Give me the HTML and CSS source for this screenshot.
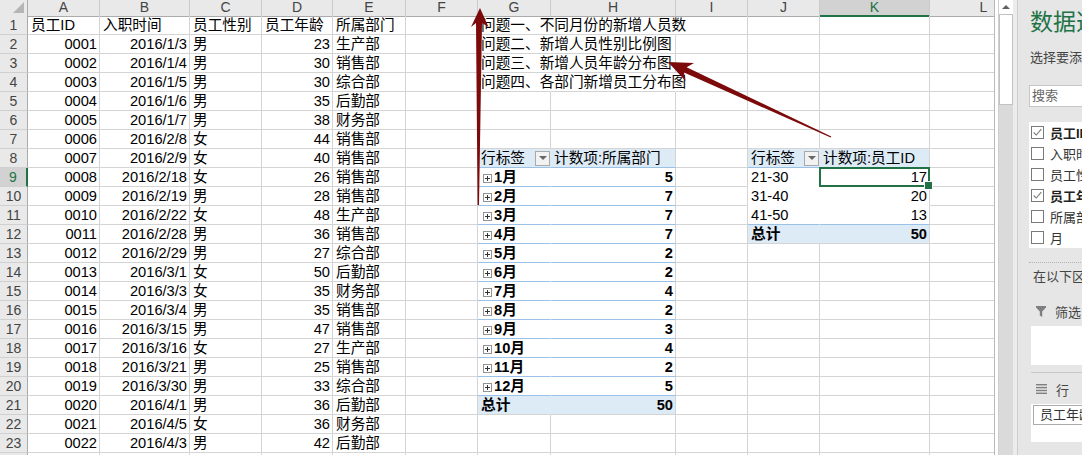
FILE: index.html
```html
<!DOCTYPE html>
<html lang="zh-CN">
<head>
<meta charset="utf-8">
<title>数据透视表</title>
<link rel="stylesheet" href="styles.css">
</head>
<body>
<div class="app">
  <div class="sheet">
    <div class="row head">
      <div class="corner"><span class="tri"></span></div>
      <div class="ch">A</div><div class="ch">B</div><div class="ch">C</div><div class="ch">D</div><div class="ch">E</div><div class="ch">F</div><div class="ch">G</div><div class="ch">H</div><div class="ch">I</div><div class="ch">J</div><div class="ch hsel">K</div><div class="ch">L</div>
    </div>
    <div class="row"><div class="rn">1</div><div class="c">员工ID</div><div class="c">入职时间</div><div class="c">员工性别</div><div class="c">员工年龄</div><div class="c">所属部门</div><div class="c"></div><div class="c ov">问题一、不同月份的新增人员数</div><div class="c nb"></div><div class="c"></div><div class="c"></div><div class="c"></div><div class="c"></div></div>
    <div class="row"><div class="rn">2</div><div class="c r">0001</div><div class="c r">2016/1/3</div><div class="c">男</div><div class="c r">23</div><div class="c">生产部</div><div class="c"></div><div class="c ov">问题二、新增人员性别比例图</div><div class="c"></div><div class="c"></div><div class="c"></div><div class="c"></div><div class="c"></div></div>
    <div class="row"><div class="rn">3</div><div class="c r">0002</div><div class="c r">2016/1/4</div><div class="c">男</div><div class="c r">30</div><div class="c">销售部</div><div class="c"></div><div class="c ov">问题三、新增人员年龄分布图</div><div class="c"></div><div class="c"></div><div class="c"></div><div class="c"></div><div class="c"></div></div>
    <div class="row"><div class="rn">4</div><div class="c r">0003</div><div class="c r">2016/1/5</div><div class="c">男</div><div class="c r">30</div><div class="c">综合部</div><div class="c"></div><div class="c ov">问题四、各部门新增员工分布图</div><div class="c nb"></div><div class="c"></div><div class="c"></div><div class="c"></div><div class="c"></div></div>
    <div class="row"><div class="rn">5</div><div class="c r">0004</div><div class="c r">2016/1/6</div><div class="c">男</div><div class="c r">35</div><div class="c">后勤部</div><div class="c"></div><div class="c"></div><div class="c"></div><div class="c"></div><div class="c"></div><div class="c"></div><div class="c"></div></div>
    <div class="row"><div class="rn">6</div><div class="c r">0005</div><div class="c r">2016/1/7</div><div class="c">男</div><div class="c r">38</div><div class="c">财务部</div><div class="c"></div><div class="c"></div><div class="c"></div><div class="c"></div><div class="c"></div><div class="c"></div><div class="c"></div></div>
    <div class="row"><div class="rn">7</div><div class="c r">0006</div><div class="c r">2016/2/8</div><div class="c">女</div><div class="c r">44</div><div class="c">销售部</div><div class="c"></div><div class="c"></div><div class="c"></div><div class="c"></div><div class="c"></div><div class="c"></div><div class="c"></div></div>
    <div class="row"><div class="rn">8</div><div class="c r">0007</div><div class="c r">2016/2/9</div><div class="c">女</div><div class="c r">40</div><div class="c">销售部</div><div class="c"></div><div class="c ph pg hdr"><span>行标签</span><span class="dd"></span></div><div class="c ph">计数项:所属部门</div><div class="c"></div><div class="c ph pg hdr"><span>行标签</span><span class="dd"></span></div><div class="c ph">计数项:员工ID</div><div class="c"></div></div>
    <div class="row"><div class="rn rsel">9</div><div class="c r">0008</div><div class="c r">2016/2/18</div><div class="c">女</div><div class="c r">26</div><div class="c">销售部</div><div class="c"></div><div class="c pg pl b"><span class="ex"></span>1月</div><div class="c pl r b">5</div><div class="c"></div><div class="c pg pw">21-30</div><div class="c r pw cur">17</div><div class="c"></div></div>
    <div class="row"><div class="rn">10</div><div class="c r">0009</div><div class="c r">2016/2/19</div><div class="c">男</div><div class="c r">28</div><div class="c">销售部</div><div class="c"></div><div class="c pg pl b"><span class="ex"></span>2月</div><div class="c pl r b">7</div><div class="c"></div><div class="c pg pw">31-40</div><div class="c r pw">20</div><div class="c"></div></div>
    <div class="row"><div class="rn">11</div><div class="c r">0010</div><div class="c r">2016/2/22</div><div class="c">女</div><div class="c r">48</div><div class="c">生产部</div><div class="c"></div><div class="c pg pl b"><span class="ex"></span>3月</div><div class="c pl r b">7</div><div class="c"></div><div class="c pg pl">41-50</div><div class="c r pl">13</div><div class="c"></div></div>
    <div class="row"><div class="rn">12</div><div class="c r">0011</div><div class="c r">2016/2/28</div><div class="c">男</div><div class="c r">36</div><div class="c">销售部</div><div class="c"></div><div class="c pg pl b"><span class="ex"></span>4月</div><div class="c pl r b">7</div><div class="c"></div><div class="c pt pg b">总计</div><div class="c pt r b">50</div><div class="c"></div></div>
    <div class="row"><div class="rn">13</div><div class="c r">0012</div><div class="c r">2016/2/29</div><div class="c">男</div><div class="c r">27</div><div class="c">综合部</div><div class="c"></div><div class="c pg pl b"><span class="ex"></span>5月</div><div class="c pl r b">2</div><div class="c"></div><div class="c"></div><div class="c"></div><div class="c"></div></div>
    <div class="row"><div class="rn">14</div><div class="c r">0013</div><div class="c r">2016/3/1</div><div class="c">女</div><div class="c r">50</div><div class="c">后勤部</div><div class="c"></div><div class="c pg pl b"><span class="ex"></span>6月</div><div class="c pl r b">2</div><div class="c"></div><div class="c"></div><div class="c"></div><div class="c"></div></div>
    <div class="row"><div class="rn">15</div><div class="c r">0014</div><div class="c r">2016/3/3</div><div class="c">女</div><div class="c r">35</div><div class="c">财务部</div><div class="c"></div><div class="c pg pl b"><span class="ex"></span>7月</div><div class="c pl r b">4</div><div class="c"></div><div class="c"></div><div class="c"></div><div class="c"></div></div>
    <div class="row"><div class="rn">16</div><div class="c r">0015</div><div class="c r">2016/3/4</div><div class="c">男</div><div class="c r">35</div><div class="c">销售部</div><div class="c"></div><div class="c pg pl b"><span class="ex"></span>8月</div><div class="c pl r b">2</div><div class="c"></div><div class="c"></div><div class="c"></div><div class="c"></div></div>
    <div class="row"><div class="rn">17</div><div class="c r">0016</div><div class="c r">2016/3/15</div><div class="c">男</div><div class="c r">47</div><div class="c">销售部</div><div class="c"></div><div class="c pg pl b"><span class="ex"></span>9月</div><div class="c pl r b">3</div><div class="c"></div><div class="c"></div><div class="c"></div><div class="c"></div></div>
    <div class="row"><div class="rn">18</div><div class="c r">0017</div><div class="c r">2016/3/16</div><div class="c">女</div><div class="c r">27</div><div class="c">生产部</div><div class="c"></div><div class="c pg pl b"><span class="ex"></span>10月</div><div class="c pl r b">4</div><div class="c"></div><div class="c"></div><div class="c"></div><div class="c"></div></div>
    <div class="row"><div class="rn">19</div><div class="c r">0018</div><div class="c r">2016/3/21</div><div class="c">男</div><div class="c r">25</div><div class="c">销售部</div><div class="c"></div><div class="c pg pl b"><span class="ex"></span>11月</div><div class="c pl r b">2</div><div class="c"></div><div class="c"></div><div class="c"></div><div class="c"></div></div>
    <div class="row"><div class="rn">20</div><div class="c r">0019</div><div class="c r">2016/3/30</div><div class="c">男</div><div class="c r">33</div><div class="c">综合部</div><div class="c"></div><div class="c pg pl b"><span class="ex"></span>12月</div><div class="c pl r b">5</div><div class="c"></div><div class="c"></div><div class="c"></div><div class="c"></div></div>
    <div class="row"><div class="rn">21</div><div class="c r">0020</div><div class="c r">2016/4/1</div><div class="c">男</div><div class="c r">36</div><div class="c">后勤部</div><div class="c"></div><div class="c pt pg b">总计</div><div class="c pt r b">50</div><div class="c"></div><div class="c"></div><div class="c"></div><div class="c"></div></div>
    <div class="row"><div class="rn">22</div><div class="c r">0021</div><div class="c r">2016/4/5</div><div class="c">女</div><div class="c r">36</div><div class="c">财务部</div><div class="c"></div><div class="c"></div><div class="c"></div><div class="c"></div><div class="c"></div><div class="c"></div><div class="c"></div></div>
    <div class="row"><div class="rn">23</div><div class="c r">0022</div><div class="c r">2016/4/3</div><div class="c">男</div><div class="c r">42</div><div class="c">后勤部</div><div class="c"></div><div class="c"></div><div class="c"></div><div class="c"></div><div class="c"></div><div class="c"></div><div class="c"></div></div>
    <div class="row"><div class="rn"></div><div class="c"></div><div class="c"></div><div class="c"></div><div class="c"></div><div class="c"></div><div class="c"></div><div class="c"></div><div class="c"></div><div class="c"></div><div class="c"></div><div class="c"></div><div class="c"></div></div>
  </div>

  <div class="vs">
    <div class="vs-btn"><span class="up"></span></div>
    <div class="vs-thumb"></div>
  </div>

  <div class="panel">
    <div class="ptitle">数据透视表字段</div>
    <div class="psub">选择要添加到报表的字段:</div>
    <div class="search">搜索</div>
    <div class="fields">
      <div class="field on"><span class="cb"><svg viewBox="0 0 13 13" width="11" height="11"><polyline points="2,6.5 5,9.5 11,2.5" fill="none" stroke="#7a7a7a" stroke-width="1.3"/></svg></span>员工ID</div>
      <div class="field"><span class="cb"></span>入职时间</div>
      <div class="field"><span class="cb"></span>员工性别</div>
      <div class="field on"><span class="cb"><svg viewBox="0 0 13 13" width="11" height="11"><polyline points="2,6.5 5,9.5 11,2.5" fill="none" stroke="#7a7a7a" stroke-width="1.3"/></svg></span>员工年龄</div>
      <div class="field"><span class="cb"></span>所属部门</div>
      <div class="field"><span class="cb"></span>月</div>
    </div>
    <div class="dots"></div>
    <div class="alabel">在以下区域间拖动字段:</div>
    <div class="area-h"><svg width="10" height="11" viewBox="0 0 10 11"><path d="M0 0H10V1.5L6.2 5.5V11L3.8 9.6V5.5L0 1.5Z" fill="#7f7f7f"/></svg><span>筛选</span></div>
    <div class="abox"></div>
    <div class="asep"></div>
    <div class="area-h"><svg width="11" height="10" viewBox="0 0 11 10"><rect x="0" y="0" width="11" height="1.4" fill="#808080"/><rect x="0" y="2.9" width="11" height="1.4" fill="#808080"/><rect x="0" y="5.8" width="11" height="1.4" fill="#808080"/><rect x="0" y="8.6" width="11" height="1.4" fill="#808080"/></svg><span>行</span></div>
    <div class="abox rowbox"><div class="chip">员工年龄</div></div>
  </div>
</div>

<svg class="arrows" width="1082" height="455" viewBox="0 0 1082 455">
  <polygon points="480,8 488.5,27 482,23 479,205 477.6,205 476,23 471,27" fill="#7d0a0a"/>
  <polygon points="668,62 694,62.9 686.6,67.2 831.3,136.5 830.7,137.5 684,72.6 685.6,81.1" fill="#7d0a0a"/>
</svg>
</body>
</html>
```

FILE: styles.css
```css
* { box-sizing: border-box; }
html, body { margin: 0; padding: 0; }
body {
  width: 1082px;
  height: 455px;
  overflow: hidden;
  position: relative;
  background: #fff;
  color: #000;
  font-family: "Liberation Sans", "Noto Sans CJK SC", sans-serif;
  font-size: 14.67px;
}
.app { display: flex; height: 455px; }

/* ---------- sheet ---------- */
.sheet {
  width: 995px;
  flex: none;
  overflow: hidden;
  border-right: 1px solid #b9b9b9;
}
.row {
  display: grid;
  grid-template-columns: 28px 72px 90px 72px 71px 73px 72px 73px 125px 72px 72px 110px 108px;
  height: 19px;
}
.row.head { height: 16px; }
.corner {
  background: #e9e9e9;
  border-right: 1px solid #ababab;
  border-bottom: 1px solid #ababab;
  display: flex;
  justify-content: flex-end;
  align-items: flex-end;
  padding: 0 3px 3px 0;
}
.tri {
  width: 0; height: 0;
  border-left: 11px solid transparent;
  border-bottom: 11px solid #b5b5b5;
}
.ch {
  background: #e9e9e9;
  border-right: 1px solid #cbcbcb;
  border-bottom: 1px solid #ababab;
  text-align: center;
  color: #444;
  font-size: 14px;
  line-height: 15px;
}
.ch.hsel {
  background: #d2d2d2;
  color: #217346;
  border-bottom: 2px solid #217346;
}
.rn {
  background: #e9e9e9;
  border-right: 1px solid #ababab;
  border-bottom: 1px solid #d0d0d0;
  text-align: center;
  color: #444;
  font-size: 14px;
  line-height: 18px;
}
.rn.rsel {
  background: #d2d2d2;
  color: #217346;
  border-right: 2px solid #217346;
}
.c {
  border-right: 1px solid #d4d4d4;
  border-bottom: 1px solid #d4d4d4;
  padding: 0 2px 0 3px;
  line-height: 18px;
  white-space: nowrap;
  overflow: hidden;
}
.r { text-align: right; }
.b { font-weight: 700; }
.ov { overflow: visible; border-right-color: transparent; }
.nb { border-right-color: transparent; }

/* ---------- pivot tables ---------- */
.ph { background: #ddebf7; border-bottom-color: #9bc2e6; }
.pg { border-right-color: transparent; }
.pl { border-bottom-color: #9bc2e6; }
.pw { border-bottom-color: transparent; }
.pt { background: #ddebf7; }
.hdr {
  display: flex;
  justify-content: space-between;
  align-items: center;
  padding-right: 0;
}
.dd {
  width: 15px;
  height: 15px;
  border: 1px solid #a9a9a9;
  background: #f2f2f2;
  display: flex;
  align-items: center;
  justify-content: center;
}
.dd::before {
  content: "";
  width: 0; height: 0;
  border-left: 4px solid transparent;
  border-right: 4px solid transparent;
  border-top: 4px solid #666;
}
.ex {
  display: inline-block;
  width: 9px;
  height: 9px;
  margin: 0 2px 0 2px;
  vertical-align: -1px;
  border: 1px solid #939393;
  background:
    linear-gradient(#333, #333) center / 5px 1px no-repeat,
    linear-gradient(#333, #333) center / 1px 5px no-repeat,
    #fff;
}
.cur { position: relative; overflow: visible; }
.cur::before {
  content: "";
  position: absolute;
  left: -1px; top: -1px; right: -1px; bottom: -1px;
  border: 2px solid #217346;
  z-index: 2;
}
.cur::after {
  content: "";
  position: absolute;
  right: -4px; bottom: -4px;
  width: 7px; height: 7px;
  background: #217346;
  border: 1px solid #fff;
  z-index: 3;
}

/* ---------- scrollbar ---------- */
.vs {
  width: 15px;
  flex: none;
  margin-left: 3px;
  background: #dadada;
  border-left: 1px solid #cfcfcf;
  display: flex;
  flex-direction: column;
}
.vs-btn {
  height: 14px;
  background: #fff;
  display: flex;
  align-items: center;
  justify-content: center;
}
.up {
  width: 0; height: 0;
  border-left: 4px solid transparent;
  border-right: 4px solid transparent;
  border-bottom: 4px solid #606060;
}
.vs-thumb {
  height: 91px;
  background: #fff;
  border: 1px solid #c2c2c2;
}

/* ---------- field list panel ---------- */
.panel {
  flex: 1;
  min-width: 0;
  overflow: hidden;
  background: #e6e6e6;
  border-left: 4px solid #ececec;
  box-shadow: inset 1px 0 0 #cdcdcd;
  padding-left: 12px;
  white-space: nowrap;
  font-size: 13px;
  color: #444;
}
.ptitle {
  margin-top: 8px;
  padding-left: 1px;
  font-size: 23px;
  line-height: 28px;
  color: #217346;
}
.psub {
  margin-top: 13px;
  padding-left: 1px;
  line-height: 18px;
}
.search {
  margin-top: 18px;
  width: 220px;
  height: 22px;
  background: #fff;
  border: 1px solid #c6c6c6;
  line-height: 20px;
  padding-left: 2px;
  color: #666;
}
.fields {
  margin-top: 15px;
  width: 220px;
  background: #fff;
  padding: 0;
}
.field {
  height: 21px;
  display: flex;
  align-items: center;
  gap: 6px;
  padding-left: 2px;
  color: #333;
}
.field.on { font-weight: 700; color: #222; }
.cb {
  width: 13px;
  height: 13px;
  flex: none;
  border: 1px solid #7a7a7a;
  background: #fff;
  display: flex;
  align-items: center;
  justify-content: center;
}
.dots {
  margin-top: 14px;
  width: 220px;
  border-top: 1px dotted #b4b4b4;
}
.alabel {
  margin-top: 5px;
  padding-left: 4px;
  line-height: 18px;
}
.area-h {
  margin-top: 14px;
  height: 22px;
  display: flex;
  align-items: center;
  gap: 9px;
  padding-left: 7px;
}
.area-h + .abox { margin-top: 4px; }
.abox {
  margin-left: 2px;
  width: 220px;
  height: 39px;
  background: #fff;
}
.asep {
  margin-top: 7px;
  margin-left: 2px;
  width: 220px;
  border-top: 1px solid #c8c8c8;
}
.asep + .area-h { margin-top: 5px; }
.rowbox { height: 38px; padding: 1px 0 0 2px; }
.chip {
  height: 20px;
  border: 1px solid #ababab;
  padding-left: 6px;
  line-height: 18px;
  color: #333;
}

/* ---------- annotation arrows ---------- */
.arrows {
  position: absolute;
  left: 0;
  top: 0;
  pointer-events: none;
  z-index: 10;
}
```
